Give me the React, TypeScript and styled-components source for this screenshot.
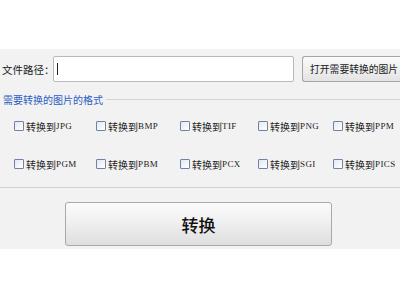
import React from "react";
import styled, { createGlobalStyle } from "styled-components";

const GlobalStyle = createGlobalStyle`
    html, body {
        margin: 0;
        padding: 0;
        background: #ffffff;
        font-family: "Noto Sans CJK SC", "Liberation Sans", sans-serif;
        color: #1a1a1a;
    }
`;

/* Styling */
const TopSpace = styled.div`
    height: 49px;
    background: #ffffff;
`;

const Panel = styled.div`
    height: 200px;
    background: #f2f2f2;
    display: flex;
    flex-direction: column;
    overflow: hidden;
`;

const PathRow = styled.div`
    display: flex;
    align-items: center;
    height: 26px;
    margin-top: 7px;
    padding-left: 2px;
`;

const Label = styled.span`
    font-size: 10.5px;
    width: 51px;
    white-space: nowrap;
`;

const PathInput = styled.div`
    box-sizing: border-box;
    width: 241px;
    height: 26px;
    background: #ffffff;
    border: 1px solid #b9b9b9;
    border-radius: 2px;
    display: flex;
    align-items: center;
    padding-left: 3px;
`;

const Caret = styled.span`
    width: 1px;
    height: 12px;
    background: #222;
`;

const OpenButton = styled.div`
    box-sizing: border-box;
    margin-left: 8px;
    flex: 1;
    height: 26px;
    border: 1px solid #a5a5a5;
    border-right: none;
    border-radius: 3px 0 0 3px;
    background: linear-gradient(#fbfbfb, #e3e3e3);
    font-size: 9.8px;
    display: flex;
    align-items: center;
    padding-left: 7px;
    white-space: nowrap;
`;

const GroupTitle = styled.div`
    display: flex;
    align-items: center;
    margin-top: 10px;
    padding-left: 3px;
    height: 14px;
`;

const GroupText = styled.span`
    font-size: 10px;
    color: #2b5cc4;
    white-space: nowrap;
`;

const GroupLine = styled.div`
    flex: 1;
    height: 1px;
    margin-left: 3px;
    background: #d4d4d4;
`;

const Grid = styled.div`
    display: grid;
    grid-template-columns: 82px 84px 78px 75px 1fr;
    grid-auto-rows: 18px;
    row-gap: 20px;
    padding-left: 14px;
    margin-top: 11px;
`;

const Option = styled.label`
    display: flex;
    align-items: center;
    font-size: 10px;
    white-space: nowrap;
    color: #222;
`;

const Box = styled.span`
    box-sizing: border-box;
    width: 10px;
    height: 10px;
    margin-right: 2px;
    border: 1px solid #7083a6;
    border-radius: 1px;
    background: linear-gradient(135deg, #e4e8ef, #ffffff);
`;

const Format = styled.span`
    font-family: "Liberation Serif", serif;
    font-size: 9px;
    letter-spacing: 0.4px;
`;

const Separator = styled.div`
    height: 1px;
    margin-top: 14px;
    background: #d0d0d0;
`;

const ConvertButton = styled.div`
    box-sizing: border-box;
    margin: 14px 0 0 65px;
    width: 267px;
    height: 44px;
    border: 1px solid #a9a9a9;
    border-radius: 3px;
    background: linear-gradient(#fbfbfb 0%, #f0f0f0 45%, #dedede 100%);
    display: flex;
    align-items: center;
    justify-content: center;
    font-size: 17px;
    font-weight: 500;
    color: #111;
`;

const formats = ["JPG", "BMP", "TIF", "PNG", "PPM", "PGM", "PBM", "PCX", "SGI", "PICS"];

export default function App() {
    return (
        <div>
            <GlobalStyle />
            <TopSpace />
            <Panel>
                <PathRow>
                    <Label>文件路径：</Label>
                    <PathInput>
                        <Caret />
                    </PathInput>
                    <OpenButton>打开需要转换的图片</OpenButton>
                </PathRow>
                <GroupTitle>
                    <GroupText>需要转换的图片的格式</GroupText>
                    <GroupLine />
                </GroupTitle>
                <Grid>
                    {formats.map((f) => (
                        <Option key={f}>
                            <Box />
                            转换到<Format>{f}</Format>
                        </Option>
                    ))}
                </Grid>
                <Separator />
                <ConvertButton>转换</ConvertButton>
            </Panel>
        </div>
    );
}
